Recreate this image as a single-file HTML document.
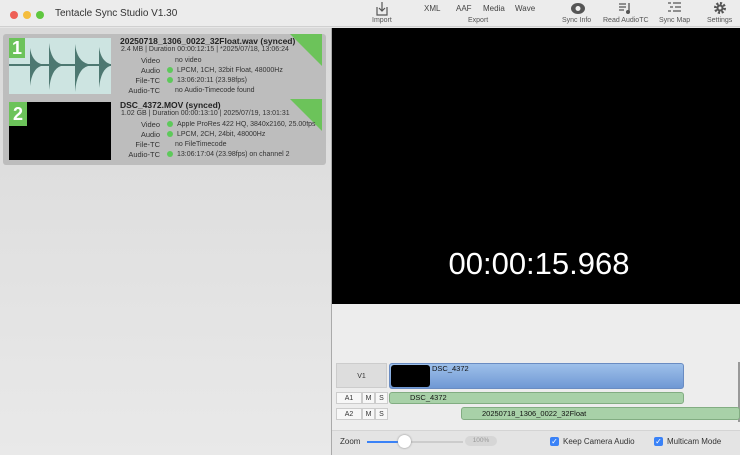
<!DOCTYPE html><html><head><style>
*{margin:0;padding:0;box-sizing:border-box}
body{width:740px;height:455px;overflow:hidden;background:#e6e6e6;font-family:"Liberation Sans",sans-serif;position:relative}
.a{position:absolute}
.tb{left:0;top:0;width:740px;height:27px;background:#ececec;border-bottom:1px solid #d0d0d0}
.dot{width:8px;height:8px;border-radius:50%;top:11px}
.sm{font-size:7px;color:#555}
.lbl{font-size:7.5px;color:#333;text-align:right;width:50px}
.val{font-size:7px;color:#333}
.g{display:inline-block;width:6px;height:6px;border-radius:50%;background:#5dc95a;margin-right:4px;vertical-align:-1px}
.trk{font-size:7px;color:#333;background:#f7f7f7;border:1px solid #ccc;text-align:center}
</style></head><body>
<div class="a tb"></div>
<div class="a dot" style="left:10px;background:#ee5f56"></div>
<div class="a dot" style="left:23px;background:#f4bd3d"></div>
<div class="a dot" style="left:36px;background:#5fc73f"></div>
<div class="a" style="left:55px;top:8px;font-size:10px;color:#333">Tentacle Sync Studio V1.30</div>
<svg class="a" style="left:374px;top:1px" width="16" height="16" viewBox="0 0 16 16"><path d="M3 6v8h10V6M8 1v9M5 7l3 3 3-3" fill="none" stroke="#555" stroke-width="1.2"/></svg>
<div class="a sm" style="left:372px;top:17px">Import</div>
<div class="a" style="left:424px;top:4px;font-size:8px;color:#444">XML</div>
<div class="a" style="left:456px;top:4px;font-size:8px;color:#444">AAF</div>
<div class="a" style="left:483px;top:4px;font-size:8px;color:#444">Media</div>
<div class="a" style="left:515px;top:4px;font-size:8px;color:#444">Wave</div>
<div class="a sm" style="left:468px;top:17px">Export</div>
<svg class="a" style="left:570px;top:2px" width="16" height="13"><ellipse cx="8" cy="6.5" rx="7" ry="5.5" fill="#555"/><circle cx="8" cy="6.5" r="2.5" fill="#eee"/></svg>
<div class="a sm" style="left:562px;top:17px">Sync Info</div>
<svg class="a" style="left:618px;top:1px" width="14" height="14"><path d="M1 3h7M1 6h7M1 9h5M11 2v9" stroke="#555" stroke-width="1.3"/><circle cx="10" cy="11" r="2" fill="#555"/></svg>
<div class="a sm" style="left:603px;top:17px">Read AudioTC</div>
<svg class="a" style="left:667px;top:2px" width="16" height="12"><path d="M1 1h3M6 1h8M3 5h3M8 5h6M1 9h3M6 9h8" stroke="#555" stroke-width="1.2"/></svg>
<div class="a sm" style="left:659px;top:17px">Sync Map</div>
<svg class="a" style="left:713px;top:1px" width="14" height="14" viewBox="0 0 14 14"><circle cx="7" cy="7" r="4.5" fill="none" stroke="#555" stroke-width="3" stroke-dasharray="2 1.5"/><circle cx="7" cy="7" r="3.5" fill="#555"/><circle cx="7" cy="7" r="1.5" fill="#eee"/></svg>
<div class="a sm" style="left:707px;top:17px">Settings</div>

<div class="a" style="left:0;top:28px;width:331px;height:427px;background:linear-gradient(#d9d9d9,#e9e9e9)"></div>
<div class="a" style="left:3px;top:34px;width:323px;height:131px;background:#bdbdbd;border-radius:3px"></div>
<div class="a" style="left:9px;top:38px;width:102px;height:56px;background:#cde4e1"></div>
<svg class="a" style="left:9px;top:38px" width="102" height="56">
<rect x="0" y="26" width="102" height="2" fill="#4d7871"/>
<g fill="#4d7871">
<path d="M21 10 Q23 23 32 26 L32 28 Q23 31 21 48 Z"/>
<path d="M40 5 Q42 23 52 26 L52 28 Q42 31 40 52 Z"/>
<path d="M66 6 Q68 23 79 26 L79 28 Q68 31 66 54 Z"/>
<path d="M90 9 Q92 23 101 26 L101 28 Q92 31 90 50 Z"/>
</g></svg>
<div class="a" style="left:9px;top:38px;width:16px;height:20px;background:#6cc35a;color:#fff;font:bold 18px 'Liberation Sans';text-align:center;line-height:20px">1</div>
<div class="a" style="left:9px;top:102px;width:102px;height:58px;background:#000"></div>
<div class="a" style="left:9px;top:102px;width:18px;height:24px;background:#6cc35a;color:#fff;font:bold 18px 'Liberation Sans';text-align:center;line-height:24px">2</div>
<svg class="a" style="left:290px;top:34px" width="32" height="32"><path d="M0 0h32v32z" fill="#6cc35a"/></svg>
<svg class="a" style="left:290px;top:99px" width="32" height="32"><path d="M0 0h32v32z" fill="#6cc35a"/></svg>

<div class="a" style="left:120px;top:36px;font-size:8.5px;font-weight:bold;color:#222">20250718_1306_0022_32Float.wav (synced)</div>
<div class="a val" style="left:121px;top:46px">2.4 MB | Duration 00:00:12:15 | *2025/07/18, 13:06:24</div>
<div class="a lbl" style="left:110px;top:56px">Video</div><div class="a val" style="left:175px;top:57px">no video</div>
<div class="a lbl" style="left:110px;top:66px">Audio</div><div class="a val" style="left:167px;top:67px"><span class="g"></span>LPCM, 1CH, 32bit Float, 48000Hz</div>
<div class="a lbl" style="left:110px;top:76px">File-TC</div><div class="a val" style="left:167px;top:77px"><span class="g"></span>13:06:20:11 (23.98fps)</div>
<div class="a lbl" style="left:110px;top:86px">Audio-TC</div><div class="a val" style="left:175px;top:87px">no Audio-Timecode found</div>

<div class="a" style="left:120px;top:100px;font-size:8.5px;font-weight:bold;color:#222">DSC_4372.MOV (synced)</div>
<div class="a val" style="left:121px;top:110px">1.02 GB | Duration 00:00:13:10 | 2025/07/19, 13:01:31</div>
<div class="a lbl" style="left:110px;top:120px">Video</div><div class="a val" style="left:167px;top:121px;white-space:nowrap;width:155px;overflow:hidden"><span class="g"></span>Apple ProRes 422 HQ, 3840x2160, 25.00fps</div>
<div class="a lbl" style="left:110px;top:130px">Audio</div><div class="a val" style="left:167px;top:131px"><span class="g"></span>LPCM, 2CH, 24bit, 48000Hz</div>
<div class="a lbl" style="left:110px;top:140px">File-TC</div><div class="a val" style="left:175px;top:141px">no FileTimecode</div>
<div class="a lbl" style="left:110px;top:150px">Audio-TC</div><div class="a val" style="left:167px;top:151px"><span class="g"></span>13:06:17:04 (23.98fps) on channel 2</div>

<div class="a" style="left:331px;top:28px;width:1px;height:427px;background:#aaa"></div>
<div class="a" style="left:332px;top:28px;width:408px;height:276px;background:#000"></div>
<div class="a" style="left:332px;top:246px;width:408px;text-align:center;color:#fff;font-size:31px;padding-left:6px">00:00:15.968</div>
<div class="a" style="left:332px;top:304px;width:408px;height:126px;background:#ededed"></div>
<div class="a" style="left:332px;top:430px;width:408px;height:25px;background:#e4e4e4;border-top:1px solid #d4d4d4"></div>
<div class="a" style="left:738px;top:362px;width:2px;height:60px;background:#999"></div>

<div class="a trk" style="left:336px;top:363px;width:51px;height:25px;line-height:25px;background:#ddd">V1</div>
<div class="a" style="left:389px;top:363px;width:295px;height:26px;background:linear-gradient(#9ec0ea,#6f98d4);border:1px solid #6a8cc2;border-radius:3px"></div>
<div class="a" style="left:391px;top:365px;width:39px;height:22px;background:#000;border-radius:3px"></div>
<div class="a" style="left:432px;top:364px;font-size:7.5px;color:#111">DSC_4372</div>
<div class="a trk" style="left:336px;top:392px;width:26px;height:12px;line-height:11px">A1</div>
<div class="a trk" style="left:362px;top:392px;width:13px;height:12px;line-height:11px">M</div>
<div class="a trk" style="left:375px;top:392px;width:13px;height:12px;line-height:11px">S</div>
<div class="a trk" style="left:336px;top:408px;width:26px;height:12px;line-height:11px">A2</div>
<div class="a trk" style="left:362px;top:408px;width:13px;height:12px;line-height:11px">M</div>
<div class="a trk" style="left:375px;top:408px;width:13px;height:12px;line-height:11px">S</div>
<div class="a" style="left:389px;top:392px;width:295px;height:12px;background:#a8d1a8;border:1px solid #82ad82;border-radius:3px;font-size:7.5px;line-height:10px;padding-left:20px;color:#111">DSC_4372</div>
<div class="a" style="left:461px;top:407px;width:279px;height:13px;background:#a8d1a8;border:1px solid #82ad82;border-radius:3px;font-size:7.5px;line-height:11px;padding-left:20px;color:#111">20250718_1306_0022_32Float</div>

<div class="a" style="left:340px;top:437px;font-size:8px;color:#333">Zoom</div>
<div class="a" style="left:367px;top:441px;width:96px;height:2px;background:#ccc"></div>
<div class="a" style="left:367px;top:441px;width:38px;height:2px;background:#3a82f7"></div>
<div class="a" style="left:398px;top:435px;width:13px;height:13px;border-radius:50%;background:#fff;box-shadow:0 0 2px #888"></div>
<div class="a" style="left:465px;top:436px;width:32px;height:10px;border-radius:5px;background:#d6d6d6;font-size:6.5px;color:#999;text-align:center;line-height:10px">100%</div>
<div class="a" style="left:550px;top:437px;width:9px;height:9px;border-radius:2px;background:#3a82f7;color:#fff;font-size:8px;line-height:9px;text-align:center">✓</div>
<div class="a" style="left:563px;top:437px;font-size:8px;color:#333">Keep Camera Audio</div>
<div class="a" style="left:654px;top:437px;width:9px;height:9px;border-radius:2px;background:#3a82f7;color:#fff;font-size:8px;line-height:9px;text-align:center">✓</div>
<div class="a" style="left:667px;top:437px;font-size:8px;color:#333">Multicam Mode</div>
</body></html>
